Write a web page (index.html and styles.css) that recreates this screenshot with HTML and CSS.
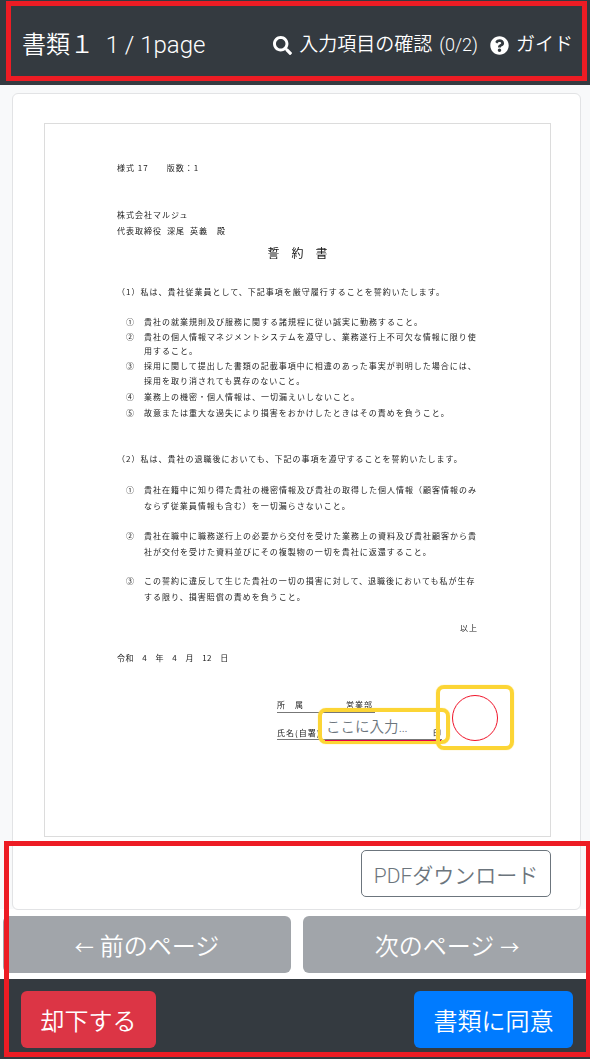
FILE: index.html
```html
<!DOCTYPE html>
<html lang="ja">
<head>
<meta charset="utf-8">
<title>書類</title>
<link rel="stylesheet" href="styles.css">
</head>
<body>
<header class="topbar">
  <h1 class="doc-title">書類１&nbsp;&nbsp;1 / 1page</h1>
  <nav class="top-links">
    <a class="top-link"><svg class="ic" viewBox="0 0 512 512"><path d="M505 442.7L405.3 343c-4.5-4.5-10.6-7-17-7H372c27.6-35.3 44-79.7 44-128C416 93.1 322.9 0 208 0S0 93.1 0 208s93.1 208 208 208c48.3 0 92.7-16.4 128-44v16.3c0 6.4 2.5 12.5 7 17l99.7 99.7c9.4 9.4 24.6 9.4 33.9 0l28.3-28.3c9.4-9.4 9.4-24.6.1-34zM208 336c-70.7 0-128-57.2-128-128 0-70.7 57.2-128 128-128 70.7 0 128 57.2 128 128 0 70.7-57.2 128-128 128z"/></svg>入力項目の確認<span class="count">(0/2)</span></a>
    <a class="top-link"><svg class="ic" viewBox="0 0 512 512"><path d="M504 256c0 136.997-111.043 248-248 248S8 392.997 8 256C8 119.083 119.043 8 256 8s248 111.083 248 248zM262.655 90c-54.497 0-89.255 22.957-116.549 63.758-3.536 5.286-2.353 12.415 2.715 16.258l34.699 26.31c5.205 3.947 12.621 3.008 16.665-2.122 17.864-22.658 30.113-35.797 57.303-35.797 20.429 0 45.698 13.148 45.698 32.958 0 14.976-12.363 22.667-32.534 33.976C247.128 238.528 216 254.941 216 296v4c0 6.627 5.373 12 12 12h56c6.627 0 12-5.373 12-12v-1.333c0-28.462 83.186-29.647 83.186-106.667 0-58.002-60.165-102-116.531-102zM256 338c-25.365 0-46 20.635-46 46 0 25.364 20.635 46 46 46s46-20.636 46-46c0-25.365-20.635-46-46-46z"/></svg>ガイド</a>
  </nav>
</header>

<main class="stage">
  <section class="card">
    <article class="page">
      <div class="sheet">
        <p class="ln">様式 17&emsp;&emsp;版数：1</p>
        <p class="ln m33">株式会社マルジュ</p>
        <p class="ln m2">代表取締役&ensp;深尾&ensp;英義&emsp;殿</p>
        <p class="ln title m8">誓&emsp;約&emsp;書</p>
        <p class="ln in1 m25">（1）私は、貴社従業員として、下記事項を厳守履行することを誓約いたします。</p>
        <p class="ln item m16"><span class="no">①</span>貴社の就業規則及び服務に関する諸規程に従い誠実に勤務すること。</p>
        <p class="ln item m1"><span class="no">②</span>貴社の個人情報マネジメントシステムを遵守し、業務遂行上不可欠な情報に限り使</p>
        <p class="ln cont m0">用すること。</p>
        <p class="ln item m1"><span class="no">③</span>採用に関して提出した書類の記載事項中に相違のあった事実が判明した場合には、</p>
        <p class="ln cont m1">採用を取り消されても異存のないこと。</p>
        <p class="ln item m2"><span class="no">④</span>業務上の機密・個人情報は、一切漏えいしないこと。</p>
        <p class="ln item m2"><span class="no">⑤</span>故意または重大な過失により損害をおかけしたときはその責めを負うこと。</p>
        <p class="ln in1 m32">（2）私は、貴社の退職後においても、下記の事項を遵守することを誓約いたします。</p>
        <p class="ln item m17"><span class="no">①</span>貴社在籍中に知り得た貴社の機密情報及び貴社の取得した個人情報（顧客情報のみ</p>
        <p class="ln cont m2">ならず従業員情報も含む）を一切漏らさないこと。</p>
        <p class="ln item m16"><span class="no">②</span>貴社在職中に職務遂行上の必要から交付を受けた業務上の資料及び貴社顧客から貴</p>
        <p class="ln cont m2">社が交付を受けた資料並びにその複製物の一切を貴社に返還すること。</p>
        <p class="ln item m15"><span class="no">③</span>この誓約に違反して生じた貴社の一切の損害に対して、退職後においても私が生存</p>
        <p class="ln cont m2">する限り、損害賠償の責めを負うこと。</p>
        <p class="ln end m17">以上</p>
        <p class="ln date m16">令和&emsp;4&emsp;年&emsp;4&emsp;月&emsp;12&emsp;日</p>
        <div class="sign">
          <p class="ln sign-dept">所&emsp;属<span class="dept">営業部</span></p>
          <p class="ln sign-name">氏名(自署)<span class="seal">印</span></p>
        </div>
      </div>
      <div class="sign-overlay">
        <input class="name-input" type="text" placeholder="ここに入力…">
        <span class="name-line"></span>
        <div class="stamp"><span class="stamp-circle"></span></div>
      </div>
    </article>
    <div class="card-foot"><button class="btn-pdf">PDFダウンロード</button></div>
  </section>
  <div class="pager">
    <button class="btn-page"><span class="arw">←</span> 前のページ</button>
    <button class="btn-page">次のページ <span class="arw">→</span></button>
  </div>
</main>

<footer class="actionbar">
  <button class="btn-act reject">却下する</button>
  <button class="btn-act agree">書類に同意</button>
</footer>

<div class="mark mark-top"></div>
<div class="mark mark-bottom"></div>
</body>
</html>
```
FILE: styles.css
```css
* { box-sizing: border-box; }
html, body { margin: 0; padding: 0; }
body {
  position: relative;
  width: 590px;
  height: 1059px;
  overflow: hidden;
  background: #fff;
  font-family: Roboto, "Noto Sans CJK JP", sans-serif;
  font-weight: 350;
  display: flex;
  flex-direction: column;
}
button { font-family: inherit; font-weight: 350; cursor: pointer; }

.topbar {
  height: 85px;
  flex: none;
  background: #343a40;
  color: #fff;
  display: flex;
  align-items: center;
  justify-content: space-between;
  padding: 5px 17px 0 22px;
}
.doc-title { margin: 0; font-size: 24px; font-weight: 350; line-height: 32px; white-space: nowrap; }
.top-links { display: flex; gap: 12px; align-items: center; }
.top-link { display: flex; align-items: center; font-size: 19px; line-height: 26px; white-space: nowrap; }
.count { font-size: 18px; margin-left: 7px; }
.ic { width: 19px; height: 19px; fill: #fff; margin-right: 7px; flex: none; }

.stage { flex: none; height: 894px; background: linear-gradient(#f8f9fa 824px, #fff 824px); padding-top: 8px; overflow: hidden; }
.card {
  width: 569px;
  height: 817px;
  margin-left: 12px;
  background: #fff;
  border: 1px solid #e2e3e5;
  border-radius: 6px;
  padding: 29px 29px 0 31px;
}
.page { position: relative; width: 507px; height: 714px; border: 1px solid #dcdcdc; background: #fff; }
.sheet { padding: 37px 72px 0 72px; filter: blur(.35px); color: #222; }
.ln {
  margin: 0;
  font-size: 8px;
  font-weight: 400;
  line-height: 14px;
  letter-spacing: 1px;
  white-space: nowrap;
  font-family: "Noto Sans CJK JP", sans-serif;
}
.m0 { margin-top: 0; }
.m1 { margin-top: 1px; }
.m2 { margin-top: 2px; }
.m8 { margin-top: 8px; }
.m15 { margin-top: 15px; }
.m16 { margin-top: 16px; }
.m17 { margin-top: 17px; }
.m25 { margin-top: 25px; }
.m32 { margin-top: 32px; }
.m33 { margin-top: 33px; }
.title { font-size: 12px; text-align: center; letter-spacing: 0; color: #111; }
.item { margin-left: 9px; display: flex; }
.no { width: 18px; flex: none; }
.cont { margin-left: 27px; }
.end { text-align: right; }
.date { letter-spacing: .4px; }

.sign { margin: 33px 0 0 160px; width: 165px; }
.sign-dept { border-bottom: 1px solid #777; width: 98px; }
.dept { margin-left: 42px; }
.sign-name {
  margin-top: 14px;
  line-height: 12px;
  border-bottom: 1px solid #777;
  display: flex;
  justify-content: space-between;
}
.sign-overlay { position: absolute; left: 0; top: 0; width: 100%; height: 100%; }
.name-line { position: absolute; left: 280px; top: 616px; width: 116px; height: 1px; background: #e6004c; }
.name-input {
  position: absolute;
  left: 273px;
  top: 584px;
  width: 132px;
  height: 36px;
  border: 4px solid #fcd535;
  border-radius: 8px;
  box-shadow: 0 0 1px #fcd535;
  background: transparent;
  padding: 2px 0 0 4px;
  outline: none;
  font: 350 14.5px/20px Roboto, "Noto Sans CJK JP", sans-serif;
}
.name-input::placeholder { color: #6c757d; opacity: 1; }
.stamp {
  position: absolute;
  left: 391px;
  top: 561px;
  width: 78px;
  height: 65px;
  border: 4px solid #fcd535;
  border-radius: 8px;
  box-shadow: 0 0 1px #fcd535;
  display: flex;
  align-items: center;
  justify-content: center;
}
.stamp-circle { width: 46px; height: 46px; border: 1px solid #f0152a; border-radius: 50%; }

.card-foot { display: flex; justify-content: flex-end; margin-top: 13px; }
.btn-pdf {
  width: 190px;
  height: 47px;
  background: #fff;
  border: 1px solid #6c757d;
  border-radius: 5px;
  color: #6c757d;
  font-size: 21px;
  padding: 0;
}

.pager { display: flex; gap: 12px; margin: 6px 0 0 3px; }
.btn-page {
  width: 288px;
  height: 57px;
  flex: none;
  background: #a1a5aa;
  color: #fff;
  border: 0;
  border-radius: 6px;
  font-size: 24px;
  padding: 0;
}
.arw { font-size: 19px; }

.actionbar {
  flex: none;
  height: 80px;
  background: #343a40;
  display: flex;
  justify-content: space-between;
  padding: 12px 17px 11px 21px;
}
.btn-act { border: 0; border-radius: 6px; color: #fff; font-size: 24px; height: 57px; padding: 0; }
.reject { width: 135px; background: #dc3545; }
.agree { width: 159px; background: #007bff; }

.mark { position: absolute; border: 5px solid #ed1c24; pointer-events: none; }
.mark-top { left: 6px; top: 1px; width: 581px; height: 80px; }
.mark-bottom { left: 4px; top: 841px; width: 587px; height: 216px; }
```
